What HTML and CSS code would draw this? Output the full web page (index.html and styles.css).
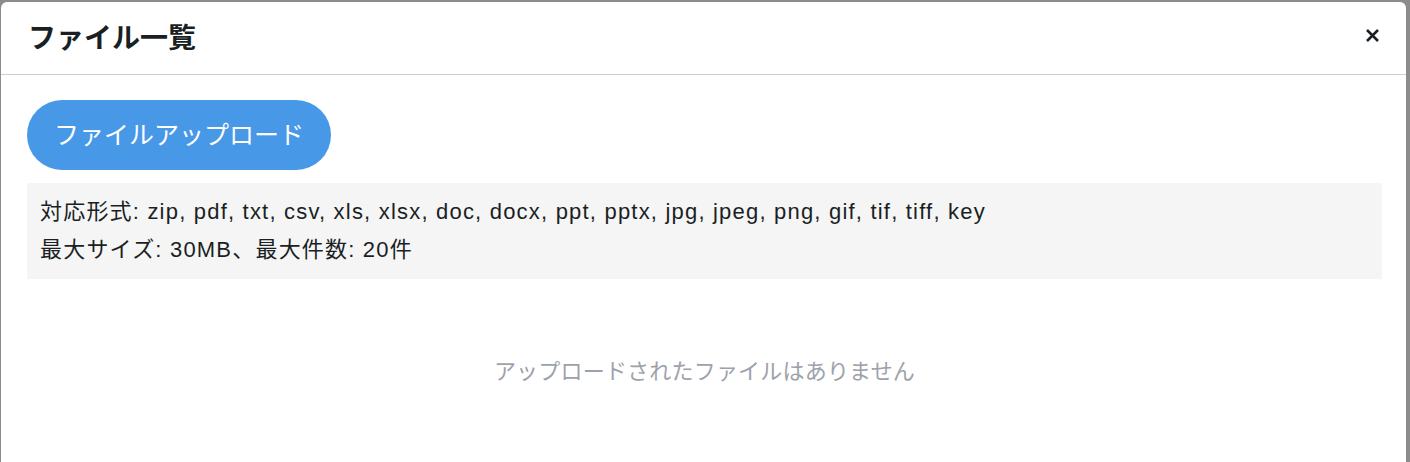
FILE: index.html
```html
<!DOCTYPE html>
<html>
<head>
    <meta charset="utf-8">
    <title>ファイル一覧</title>
    <link rel="stylesheet" href="styles.css">
</head>
<body>
<div class="modal">
    <div class="head">
        <h1 class="title">ファイル一覧</h1>
        <div class="close">
            <svg width="15" height="15" viewBox="0 0 15 15"><path d="M2 2L13 13M13 2L2 13" stroke="#1a1f24" stroke-width="2.6" stroke-linecap="butt"/></svg>
        </div>
    </div>
    <div class="body">
        <div class="btn">ファイルアップロード</div>
        <div class="info">
            <p>対応形式: zip, pdf, txt, csv, xls, xlsx, doc, docx, ppt, pptx, jpg, jpeg, png, gif, tif, tiff, key</p>
            <p>最大サイズ: 30MB、最大件数: 20件</p>
        </div>
        <div class="empty">アップロードされたファイルはありません</div>
    </div>
</div>
</body>
</html>
```

FILE: styles.css
```css
*{
    padding: 0;
    margin: 0;
    box-sizing: border-box;
}
body{
    background-color: #8c8c8c;
    font-family: "Liberation Sans", "Noto Sans CJK JP", sans-serif;
    color: #1a1f24;
    height: 100vh;
    padding: 2px 4px 0 1px;
    overflow: hidden;
}
.modal{
    background-color: #fff;
    border-radius: 6px 6px 0 0;
    height: 100%;
}
.head{
    height: 73px;
    border-bottom: 1px solid #cfcfcf;
    display: flex;
    align-items: center;
    justify-content: space-between;
    padding: 0 26px 0 27px;
}
.title{
    font-family: "Noto Sans CJK JP", sans-serif;
    font-size: 28px;
    font-weight: 700;
    margin-top: -4px;
}
.close{
    display: flex;
    margin-top: -6px;
}
.body{
    padding: 25px 24px 0 26px;
}
.btn{
    display: inline-block;
    background-color: #4898e8;
    color: #fff;
    font-size: 25px;
    line-height: 70px;
    height: 70px;
    padding: 0 27px;
    border-radius: 35px;
}
.info{
    background-color: #f5f5f5;
    margin-top: 13px;
    padding: 10px 13px;
    font-size: 22px;
    letter-spacing: 1.2px;
}
.info p{
    line-height: 38px;
}
.empty{
    text-align: center;
    color: #9da2aa;
    font-size: 22px;
    letter-spacing: 0.2px;
    margin-top: 74px;
}
```
